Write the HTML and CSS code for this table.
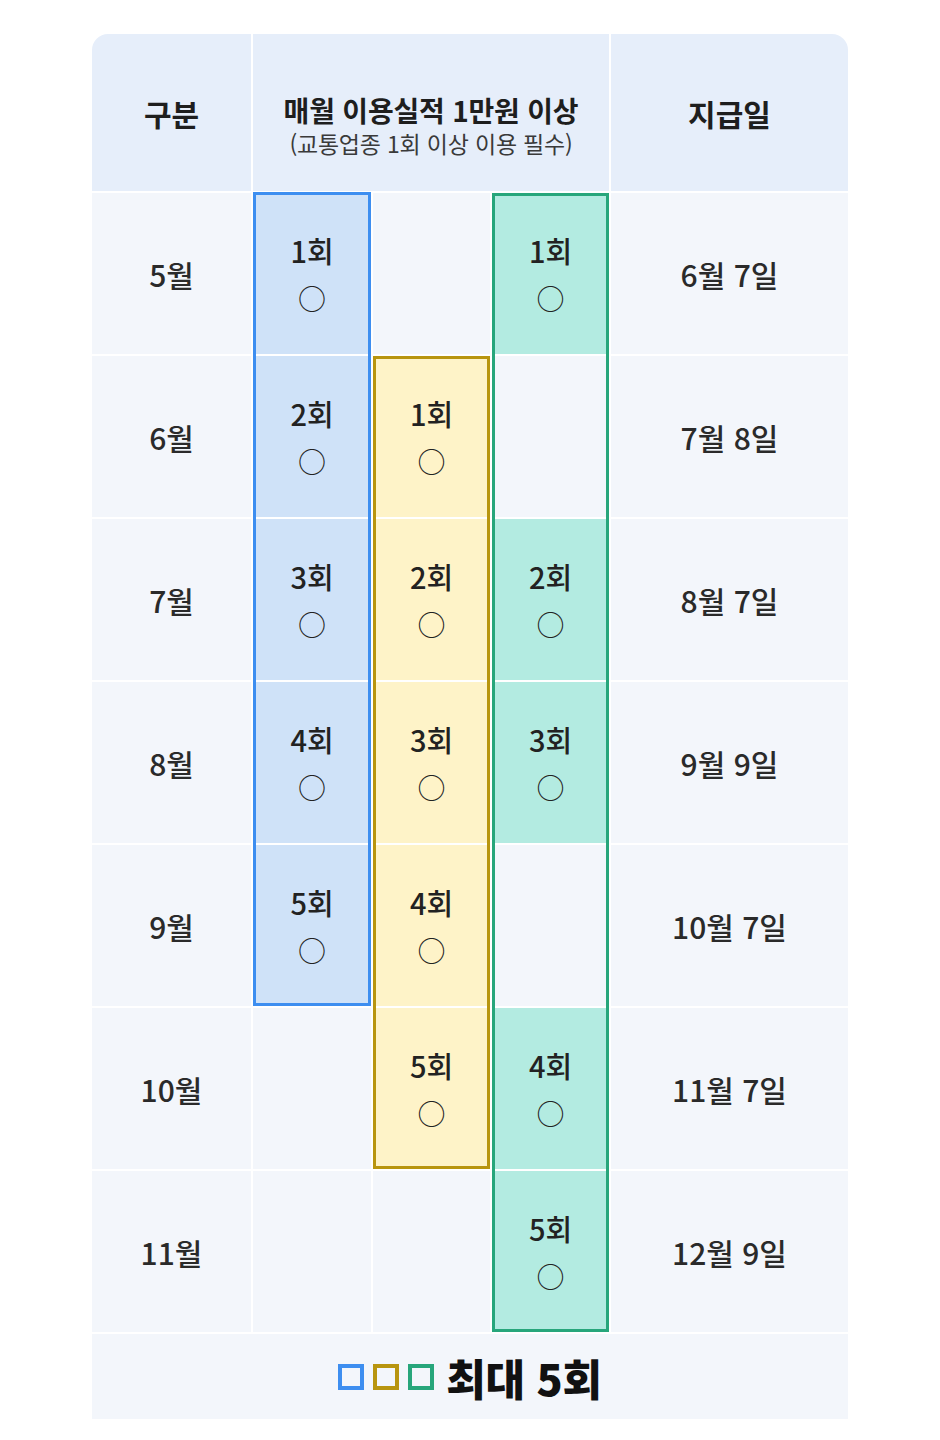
FILE: index.html
```html
<!DOCTYPE html>
<html lang="ko">
<head>
<meta charset="utf-8">
<link rel="stylesheet" href="styles.css">
</head>
<body>
<div class="page">
  <div class="table">
    <div class="cell head c1 r1"><span class="h-title">구분</span></div>
    <div class="cell head mid r1">
      <span class="h-title sm">매월 이용실적 1만원 이상</span>
      <span class="h-sub">(교통업종 1회 이상 이용 필수)</span>
    </div>
    <div class="cell head c5 r1"><span class="h-title">지급일</span></div>

    <!-- row 1 -->
    <div class="cell month c1 r2">5월</div>
    <div class="cell c2 r2 blue"><span class="cnt">1회</span><span class="ok">○</span></div>
    <div class="cell c3 r2"></div>
    <div class="cell c4 r2 green"><span class="cnt">1회</span><span class="ok">○</span></div>
    <div class="cell month c5 r2">6월 7일</div>

    <!-- row 2 -->
    <div class="cell month c1 r3">6월</div>
    <div class="cell c2 r3 blue"><span class="cnt">2회</span><span class="ok">○</span></div>
    <div class="cell c3 r3 yellow"><span class="cnt">1회</span><span class="ok">○</span></div>
    <div class="cell c4 r3"></div>
    <div class="cell month c5 r3">7월 8일</div>

    <!-- row 3 -->
    <div class="cell month c1 r4">7월</div>
    <div class="cell c2 r4 blue"><span class="cnt">3회</span><span class="ok">○</span></div>
    <div class="cell c3 r4 yellow"><span class="cnt">2회</span><span class="ok">○</span></div>
    <div class="cell c4 r4 green"><span class="cnt">2회</span><span class="ok">○</span></div>
    <div class="cell month c5 r4">8월 7일</div>

    <!-- row 4 -->
    <div class="cell month c1 r5">8월</div>
    <div class="cell c2 r5 blue"><span class="cnt">4회</span><span class="ok">○</span></div>
    <div class="cell c3 r5 yellow"><span class="cnt">3회</span><span class="ok">○</span></div>
    <div class="cell c4 r5 green"><span class="cnt">3회</span><span class="ok">○</span></div>
    <div class="cell month c5 r5">9월 9일</div>

    <!-- row 5 -->
    <div class="cell month c1 r6">9월</div>
    <div class="cell c2 r6 blue"><span class="cnt">5회</span><span class="ok">○</span></div>
    <div class="cell c3 r6 yellow"><span class="cnt">4회</span><span class="ok">○</span></div>
    <div class="cell c4 r6"></div>
    <div class="cell month c5 r6">10월 7일</div>

    <!-- row 6 -->
    <div class="cell month c1 r7">10월</div>
    <div class="cell c2 r7"></div>
    <div class="cell c3 r7 yellow"><span class="cnt">5회</span><span class="ok">○</span></div>
    <div class="cell c4 r7 green"><span class="cnt">4회</span><span class="ok">○</span></div>
    <div class="cell month c5 r7">11월 7일</div>

    <!-- row 7 -->
    <div class="cell month c1 r8">11월</div>
    <div class="cell c2 r8"></div>
    <div class="cell c3 r8"></div>
    <div class="cell c4 r8 green"><span class="cnt">5회</span><span class="ok">○</span></div>
    <div class="cell month c5 r8">12월 9일</div>

    <!-- group outlines -->
    <div class="frame frame-blue"></div>
    <div class="frame frame-yellow"></div>
    <div class="frame frame-green"></div>

    <!-- footer -->
    <div class="cell foot">
      <span class="sq sq-blue"></span>
      <span class="sq sq-yellow"></span>
      <span class="sq sq-green"></span>
      <span class="foot-text">최대 5회</span>
    </div>
  </div>
</div>
</body>
</html>
```

FILE: styles.css
```css
* { box-sizing: border-box; }

html, body {
  margin: 0;
  padding: 0;
  background: #ffffff;
}

body {
  font-family: "Noto Sans CJK KR", "Noto Sans", sans-serif;
  color: #222;
}

.page {
  padding: 34px 92px 21px;
}

.table {
  display: grid;
  grid-template-columns: 159px 118px 117px 117px 237px;
  grid-template-rows: 157px repeat(7, 161px) 85px;
  gap: 2px;
  background: #ffffff;
  border-radius: 16px 16px 0 0;
  overflow: hidden;
  width: 756px;
}

.cell {
  background: #f3f6fb;
  display: flex;
  flex-direction: column;
  align-items: center;
  justify-content: center;
}

.c1 { grid-column: 1; }
.c2 { grid-column: 2; }
.c3 { grid-column: 3; }
.c4 { grid-column: 4; }
.c5 { grid-column: 5; }
.mid { grid-column: 2 / 5; }
.r1 { grid-row: 1; }
.r2 { grid-row: 2; }
.r3 { grid-row: 3; }
.r4 { grid-row: 4; }
.r5 { grid-row: 5; }
.r6 { grid-row: 6; }
.r7 { grid-row: 7; }
.r8 { grid-row: 8; }

.head {
  background: #e6eefa;
}

.head.mid {
  padding-top: 24px;
}

.h-title {
  font-size: 30px;
  font-weight: 700;
  color: #1e1e1e;
  line-height: 38px;
  letter-spacing: 0;
}

.h-title.sm {
  font-size: 28px;
  line-height: 36px;
  letter-spacing: -0.2px;
}

.h-sub {
  font-size: 23px;
  font-weight: 400;
  color: #3a3a3a;
  line-height: 30px;
  letter-spacing: -0.2px;
}

.month {
  font-size: 30px;
  font-weight: 500;
  color: #2a2a2a;
  letter-spacing: 0;
  padding-top: 1px;
}

.cnt {
  font-size: 29px;
  font-weight: 500;
  color: #222;
  line-height: 48px;
  letter-spacing: 0;
}

.ok {
  font-size: 28px;
  font-weight: 400;
  color: #222;
  line-height: 48px;
}

.blue { background: #cfe2f8; }
.yellow { background: #fef3c8; }
.green { background: #b3ebe1; }

.frame {
  border: 3px solid;
  background: transparent;
  pointer-events: none;
}

.frame-blue {
  grid-column: 2;
  grid-row: 2 / 7;
  border-color: #3d8ef0;
  margin-top: -1px;
}

.frame-yellow {
  grid-column: 3;
  grid-row: 3 / 8;
  border-color: #b8950f;
}

.frame-green {
  grid-column: 4;
  grid-row: 2 / 9;
  border-color: #27a67b;
}

.foot {
  grid-column: 1 / 6;
  grid-row: 9;
  flex-direction: row;
  gap: 9px;
}

.sq {
  width: 26px;
  height: 26px;
  border: 4px solid;
  display: block;
}

.sq-blue { border-color: #3d8ef0; }
.sq-yellow { border-color: #b8950f; }
.sq-green { border-color: #27a67b; }

.foot-text {
  margin-left: 3px;
  font-size: 43px;
  font-weight: 900;
  color: #111;
  letter-spacing: -0.3px;
  line-height: 50px;
}
```
